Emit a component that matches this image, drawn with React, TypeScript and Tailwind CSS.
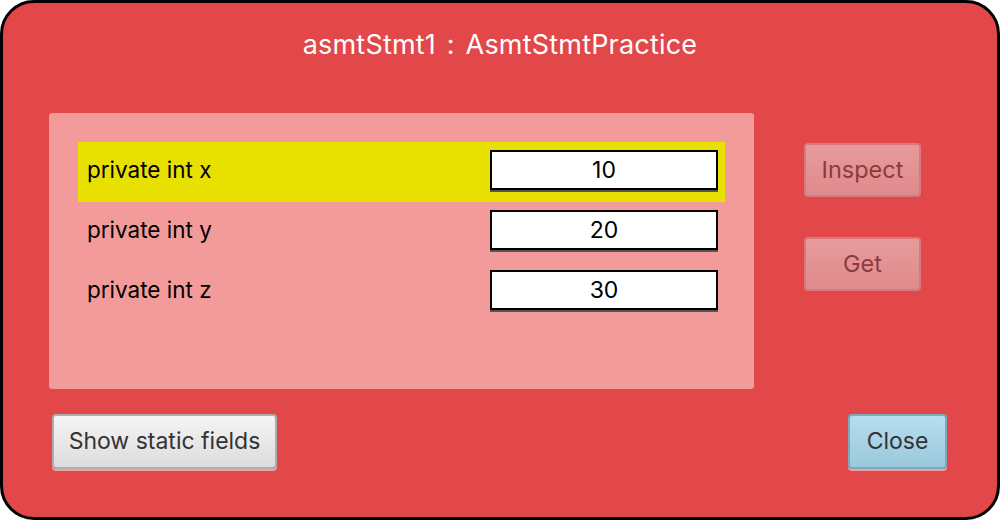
import React from 'react';

type Field = { label: string; value: string; selected?: boolean };

const fields: Field[] = [
  { label: 'private int x', value: '10', selected: true },
  { label: 'private int y', value: '20' },
  { label: 'private int z', value: '30' },
];

const FieldRow: React.FC<{ field: Field }> = ({ field }) => (
  <div
    className={`flex h-[60px] items-start justify-between pl-[9px] pr-[7px] ${
      field.selected ? 'bg-[#e8e000]' : ''
    }`}
  >
    <span className="self-center pb-[3px] text-[22.5px] leading-none text-black">{field.label}</span>
    <div className="mt-2 flex h-[40px] w-[228px] items-center justify-center border-2 border-black bg-white text-[23px] text-black shadow-[0_2px_0_#555]">
      {field.value}
    </div>
  </div>
);

const App: React.FC = () => {
  return (
    <div className="h-[520px] w-[1000px] bg-white font-['Inter','Noto_Sans',sans-serif]">
      <div className="flex h-full flex-col rounded-[34px] border-[3px] border-black bg-[#e2474a]">
        <div className="pt-[26px] text-center text-[27px] leading-8 tracking-[0.2px] text-white [word-spacing:3px]">
          asmtStmt1 : AsmtStmtPractice
        </div>

        <div className="mt-[52px] flex pl-[46px]">
          <div className="h-[276px] w-[705px] rounded-[3px] bg-[#f39b9b] px-[29px] pt-[29px]">
            {fields.map((f) => (
              <FieldRow key={f.label} field={f} />
            ))}
          </div>

          <div className="ml-[50px] mt-[30px] flex flex-col gap-[40px]">
            <button className="h-[54px] w-[117px] rounded-[4px] border-2 border-[#d9797b] bg-gradient-to-b from-[#e89b9c] to-[#df8a8c] text-[23.5px] text-[#8c3b3d]">
              Inspect
            </button>
            <button className="h-[54px] w-[117px] rounded-[4px] border-2 border-[#d9797b] bg-gradient-to-b from-[#e89b9c] to-[#df8a8c] text-[23.5px] text-[#8c3b3d]">
              Get
            </button>
          </div>
        </div>

        <div className="mt-[25px] flex justify-between pl-[49px] pr-[50px]">
          <button className="h-[55px] w-[225px] rounded-[4px] border-2 border-[#adadad] bg-gradient-to-b from-[#f5f5f5] to-[#dcdcdc] text-[23px] text-[#333] shadow-[0_2px_0_#f2a0a0]">
            Show static fields
          </button>
          <button className="h-[55px] w-[99px] rounded-[4px] border-2 border-[#7fa8ba] bg-gradient-to-b from-[#b6def0] to-[#9bc8dc] text-[23px] text-[#333] shadow-[0_2px_0_#f2a0a0]">
            Close
          </button>
        </div>
      </div>
    </div>
  );
};

export default App;
